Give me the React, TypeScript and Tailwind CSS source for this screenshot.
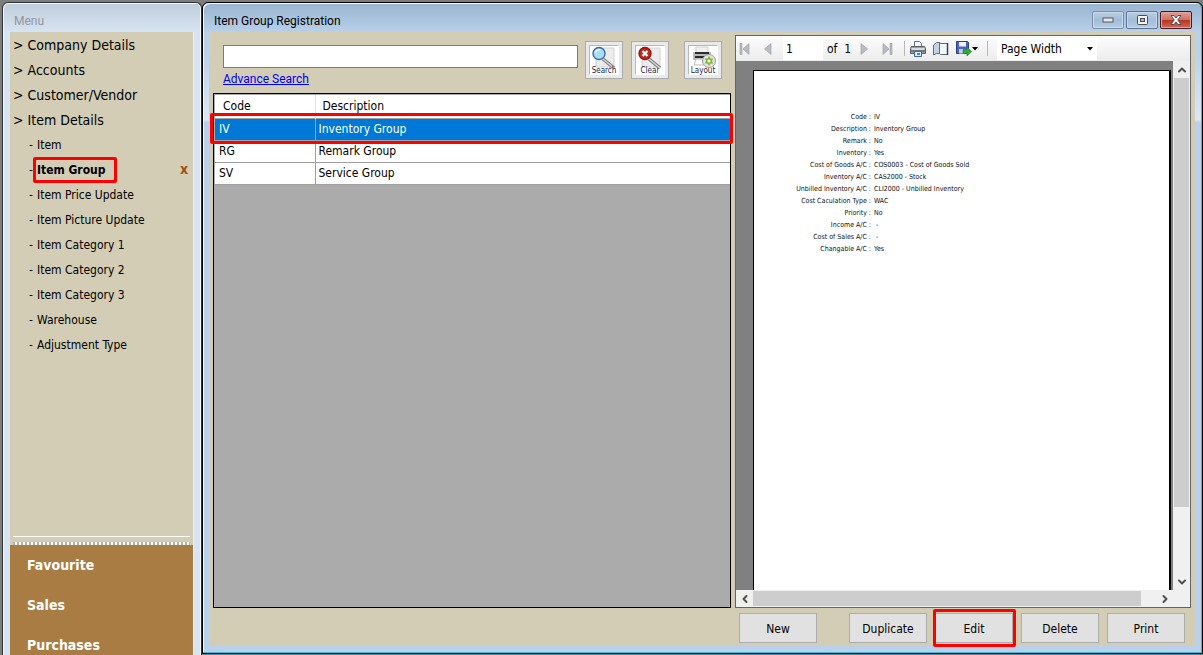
import React, { useState } from 'react';
import { ChevronUp, ChevronDown, ChevronLeft, ChevronRight } from 'lucide-react';

const menuGroups = ['Company Details', 'Accounts', 'Customer/Vendor', 'Item Details'];

const itemMenu = [
  'Item',
  'Item Group',
  'Item Price Update',
  'Item Picture Update',
  'Item Category 1',
  'Item Category 2',
  'Item Category 3',
  'Warehouse',
  'Adjustment Type',
];

const modules = ['Favourite', 'Sales', 'Purchases'];

const groups = [
  { code: 'IV', description: 'Inventory Group' },
  { code: 'RG', description: 'Remark Group' },
  { code: 'SV', description: 'Service Group' },
];

const report = [
  ['Code', 'IV'],
  ['Description', 'Inventory Group'],
  ['Remark', 'No'],
  ['Inventory', 'Yes'],
  ['Cost of Goods A/C', 'COS0003 - Cost of Goods Sold'],
  ['Inventory A/C', 'CAS2000 - Stock'],
  ['Unbilled Inventory A/C', 'CLI2000 - Unbilled Inventory'],
  ['Cost Caculation Type', 'WAC'],
  ['Priority', 'No'],
  ['Income A/C', ' -'],
  ['Cost of Sales A/C', ' -'],
  ['Changable A/C', 'Yes'],
];

const Highlight: React.FC<{ className: string }> = ({ className }) => (
  <span className={`absolute z-10 border-[3px] border-[#fe0000] rounded-[2px] pointer-events-none ${className}`} />
);

const Sidebar: React.FC = () => {
  const [active, setActive] = useState('Item Group');

  return (
    <aside className="w-[200px] shrink-0 flex flex-col rounded-t-md border-t border-x border-[#2f3338] bg-[linear-gradient(#bfcddb_0px,#d7e4f2_30px)] px-[7px] shadow-[inset_1px_1px_0_#f4f8fc,inset_-1px_0_0_#f4f8fc]">
      <header className="h-[29px] shrink-0 pt-[6px] pl-1 flex items-center text-[12px] text-[#8f979f] font-['Roboto',sans-serif]">Menu</header>
      <nav className="flex-1 min-h-0 flex flex-col bg-[#d4cdb5] border-r border-[#f3f1ea]">
        <ul className="pl-[3px]">
          {menuGroups.map((name) => (
            <li key={name} className="h-[25px] flex items-center">
              <a href="#" className="text-[14px] leading-5 text-black">&gt; {name}</a>
            </li>
          ))}
        </ul>
        <ul className="pl-[19px]">
          {itemMenu.map((name) => (
            <li key={name} className="h-[25px] flex items-center justify-between pr-[5px] text-[12px]">
              <span className="relative flex">
                <span className="w-2">-</span>
                <a
                  href="#"
                  onClick={() => setActive(name)}
                  className={name === active ? 'font-bold text-black' : 'text-black'}
                >
                  {name}
                </a>
                {name === active && <Highlight className="-inset-y-1 left-1 -right-[11px]" />}
              </span>
              {name === active && (
                <button aria-label="Close Item Group" className="text-[14px] font-bold text-[#a0500c]">x</button>
              )}
            </li>
          ))}
        </ul>
        <div className="mt-auto mx-[3px] h-[13px] pt-1">
          <div className="border-t border-white pt-[5px]">
            <div className="h-[3px] bg-[repeating-linear-gradient(90deg,#b5b2a6_0px,#b5b2a6_2px,#ffffff_2px,#ffffff_4px)]" />
          </div>
        </div>
        <ul className="h-[110px] overflow-hidden bg-[#a97c43] pl-[17px]">
          {modules.map((name) => (
            <li key={name} className="h-10 flex items-center">
              <a href="#" className="text-[14px] font-bold text-white">{name}</a>
            </li>
          ))}
        </ul>
      </nav>
    </aside>
  );
};

const WindowButtons: React.FC = () => (
  <div className="flex gap-[2px]">
    <button aria-label="Minimize" className="w-8 h-[18px] flex items-center justify-center rounded-[2px] border border-[#7c8fa8] bg-[linear-gradient(#bacde3,#a3bcd8_50%,#b6cce5)] shadow-[inset_0_0_0_1px_#c9daec]">
      <svg width="12" height="6" viewBox="0 0 12 6"><rect x="1" y="1" width="10" height="4" fill="#e6e6e6" stroke="#565a60" /></svg>
    </button>
    <button aria-label="Maximize" className="w-8 h-[18px] flex items-center justify-center rounded-[2px] border border-[#5c7390] bg-[linear-gradient(#bacde3,#a3bcd8_50%,#b6cce5)] shadow-[inset_0_0_0_1px_#c9daec]">
      <svg width="11" height="10" viewBox="0 0 11 10">
        <rect x=".5" y=".5" width="10" height="9" rx="1" fill="#f4f4f4" stroke="#494d55" />
        <rect x="3.5" y="3.5" width="4" height="3" fill="#9bb5d3" stroke="#494d55" />
      </svg>
    </button>
    <button aria-label="Close" className="w-8 h-[18px] flex items-center justify-center rounded-[2px] border border-[#4a1420] bg-[linear-gradient(#e0a096,#cf7164_48%,#b5321f_50%,#cf6a52)] shadow-[inset_0_0_0_1px_#e2a59b]">
      <svg width="12" height="10" viewBox="0 0 12 10">
        <path d="M1 .5h3l2 2.500 2-2.500h3L7.800 5 11 9.500H8L6 7 4 9.500H1L4.200 5z" fill="#f6f6f6" stroke="#4e4f5a" />
      </svg>
    </button>
  </div>
);

const Magnifier: React.FC<{ clear?: boolean }> = ({ clear }) => (
  <>
    <path d="M6 2h18v19H6z" fill="#ececec" stroke="#d2d2d2" />
    <path d="M13 13l11 9" stroke="#777" strokeWidth="3.4" />
    <path d="M13 13l11 9" stroke="#d8d8d8" strokeWidth="1.4" />
    <circle cx="9" cy="7.500" r="6" fill={clear ? '#c22718' : '#a9dcf7'} stroke={clear ? '#8c1b12' : '#3c6ea0'} strokeWidth="1.4" />
    {clear ? (
      <path d="M6.500 5l5 5M11.500 5l-5 5" stroke="#fff" strokeWidth="2.200" />
    ) : (
      <path d="M5.500 6.500a4 4 0 0 1 5-2.500" stroke="#eefaff" strokeWidth="1.600" fill="none" />
    )}
  </>
);

const LayoutIcon: React.FC = () => (
  <>
    <path d="M7 1h12v6H7z" fill="#f0f0f0" stroke="#cfcfcf" />
    <path d="M4 6h18v8H4z" fill="#b8b8b8" />
    <path d="M6 6h14v2H6zM6 10h14v2H6z" fill="#2c2c2c" />
    <path d="M7 13h11v6H5z" fill="#fafafa" stroke="#bbb" />
    <circle cx="20" cy="15" r="6.500" fill="#e4e4e4" stroke="#9a9a9a" />
    <path d="M20 10l1.500 2.400h2.800L22.900 15l1.400 2.600h-2.800L20 20l-1.500-2.400h-2.800l1.400-2.600-1.400-2.600h2.800z" fill="#7bb928" />
    <circle cx="20" cy="15" r="1.600" fill="#fff" />
  </>
);

const ImageButton: React.FC<{ label: string; className?: string; children: React.ReactNode }> = ({ label, className = '', children }) => (
  <button className={`w-[38px] h-[38px] shrink-0 flex flex-col items-center border border-[#acacac] bg-[#e9e9ec] p-[3px] ${className}`}>
    <span className="w-[30px] h-[30px] flex flex-col items-center bg-white border border-t-[#b8b8b8] border-l-[#b8b8b8] border-white">
      <svg width="28" height="22" viewBox="0 0 28 22" className="shrink-0">{children}</svg>
      <span className="-mt-px text-[8px] leading-[8px] text-[#1d1d45]">{label}</span>
    </span>
  </button>
);

const SearchBar: React.FC = () => {
  const [query, setQuery] = useState('');

  return (
    <div className="h-[61px] shrink-0 flex items-start pt-[9px] pl-[10px] pr-[9px]">
      <div className="flex-1 pt-1">
        <input
          aria-label="Search"
          value={query}
          onChange={(e) => setQuery(e.target.value)}
          className="block w-full h-[23px] px-1 bg-white border border-[#7a7a7a] text-[12px] outline-none"
        />
        <a href="#" className="block w-fit mt-1 text-[12px] leading-[15px] text-[#0000f0] underline font-['Roboto',sans-serif]">Advance Search</a>
      </div>
      <ImageButton label="Search" className="ml-[7px]"><Magnifier /></ImageButton>
      <ImageButton label="Clear" className="ml-2"><Magnifier clear /></ImageButton>
      <ImageButton label="Layout" className="ml-[15px]"><LayoutIcon /></ImageButton>
    </div>
  );
};

const GroupTable: React.FC = () => {
  const [selected, setSelected] = useState('IV');

  return (
    <div className="relative flex-1 border border-black bg-[#ababab] pt-px pl-px">
      <table className="w-full table-fixed border-collapse bg-white text-[12px]">
        <colgroup>
          <col className="w-[100px]" />
          <col />
        </colgroup>
        <thead>
          <tr className="h-[23px] border-b border-[#a0a0a0] text-left">
            <th className="border-r border-[#e0e0e0] pl-2 font-normal">Code</th>
            <th className="pl-[7px] font-normal">Description</th>
          </tr>
        </thead>
        <tbody>
          {groups.map((g) => (
            <tr
              key={g.code}
              onClick={() => setSelected(g.code)}
              className={`h-[22px] border-b border-[#a0a0a0] ${g.code === selected ? 'bg-[#0078d7] text-white' : ''}`}
            >
              <td className="border-r border-[#a0a0a0] pl-1">{g.code}</td>
              <td className="pl-[3px]">{g.description}</td>
            </tr>
          ))}
        </tbody>
      </table>
      <Highlight className="top-[19px] h-[31px] -left-1 -right-[3px]" />
    </div>
  );
};

const PagerButton: React.FC<{ label: string; d: string; className: string }> = ({ label, d, className }) => (
  <button aria-label={label} className={className}>
    <svg width="12" height="12" viewBox="0 0 12 12"><path d={d} fill="#b9bcc1" stroke="#96999e" strokeWidth=".6" /></svg>
  </button>
);

const ReportToolbar: React.FC = () => (
  <div className="h-[25px] shrink-0 flex items-center bg-[linear-gradient(#fdfdfd,#ececec)] text-[12px]">
    <PagerButton label="First page" d="M1 .5h2v11H1zM10 .5v11L4 6z" className="ml-[3px]" />
    <PagerButton label="Previous page" d="M9 .5v11L2.500 6z" className="ml-[11px]" />
    <input aria-label="Page number" defaultValue="1" className="ml-[9px] w-10 h-[23px] pl-[3px] bg-white outline-none" />
    <span className="ml-1 w-[27px] whitespace-nowrap">of&nbsp; 1</span>
    <PagerButton label="Next page" d="M3 .5v11L9.500 6z" className="ml-1" />
    <PagerButton label="Last page" d="M2 .5v11L8 6zM9 .5h2v11H9z" className="ml-[11px]" />
    <span className="ml-[11px] w-px h-[15px] bg-[#b8b8b8]" />
    <button aria-label="Print report" className="ml-[5px]">
      <svg width="16" height="16" viewBox="0 0 16 16">
        <path d="M4.500 7V.5h5l2 2V7" fill="#f5f8fc" stroke="#55708f" />
        <path d="M1.500 5.500h13l1 2v5H.5v-5z" fill="#9a9fa5" stroke="#5d6268" />
        <path d="M1.500 7h13v2h-13z" fill="#d9dcdf" />
        <path d="M1 10h14" stroke="#4c5157" />
        <path d="M4.500 10.500h7v5h-7z" fill="#dcebfb" stroke="#45698f" />
        <path d="M7 12h3v2H7z" fill="#3d8be0" />
      </svg>
    </button>
    <button aria-label="Print layout" className="ml-[7px]">
      <svg width="16" height="14" viewBox="0 0 16 14">
        <path d="M.5 3l3-2.500h3.500v11H3.500L.5 13z" fill="#c2d3e4" stroke="#5d6d7f" />
        <path d="M7.500 1.500h7v11h-7l-1-1v-11z" fill="#f6f9fc" stroke="#5d6d7f" />
        <path d="M14.500 1v12" stroke="#35424f" strokeWidth="1.500" />
      </svg>
    </button>
    <button aria-label="Export" className="ml-[7px] flex items-center gap-1">
      <svg width="16" height="15" viewBox="0 0 16 15">
        <path d="M.5.5h11l1 1v11H.5z" fill="#4a63c0" stroke="#2d3f8c" />
        <path d="M3 1h7v4.500H3z" fill="#eef2fb" />
        <path d="M3 8h6v4.500H3z" fill="#c9d3ee" />
        <path d="M7 8.500h4V6l4.500 4.500L11 15v-2.500H7z" fill="#35a838" stroke="#1d7a25" strokeWidth=".6" />
      </svg>
      <svg width="6" height="4" viewBox="0 0 6 4" className="-ml-1"><path d="M0 0h6L3 3.500z" fill="#000" /></svg>
    </button>
    <span className="ml-[9px] w-px h-[15px] bg-[#b8b8b8]" />
    <span className="relative ml-[9px]">
      <select aria-label="Zoom" className="appearance-none block w-[100px] h-[22px] pl-1 bg-white outline-none">
        <option>Page Width</option>
        <option>Whole Page</option>
        <option>100%</option>
      </select>
      <svg width="6" height="4" viewBox="0 0 6 4" className="absolute right-1 top-[9px] pointer-events-none"><path d="M0 0h6L3 3.500z" fill="#000" /></svg>
    </span>
  </div>
);

const ReportViewer: React.FC = () => (
  <section className="flex-1 min-h-0 flex flex-col border border-[#646464] bg-[#f0f0f0]">
    <ReportToolbar />
    <div className="flex-1 min-h-0 flex">
      <div className="flex-1 flex bg-[#808080] pt-[9px] pl-[17px] pr-[2px]">
        <article className="flex-1 bg-white border-t border-l border-r-2 border-black pt-10">
          <dl className="grid grid-cols-[117px_1fr] gap-x-[3px] text-[7px] leading-3 text-[#111]">
            {report.map(([label, value]) => (
              <React.Fragment key={label}>
                <dt className="text-right whitespace-nowrap">{label} :</dt>
                <dd className="whitespace-pre">{value}</dd>
              </React.Fragment>
            ))}
          </dl>
        </article>
      </div>
      <div className="w-[17px] flex flex-col items-center text-[#505050]">
        <button aria-label="Scroll up" className="h-[17px]"><ChevronUp size={12} strokeWidth={4} /></button>
        <div className="w-[15px] flex-[429] bg-[#cdcdcd]" />
        <div className="flex-[66]" />
        <button aria-label="Scroll down" className="h-[17px]"><ChevronDown size={12} strokeWidth={4} /></button>
      </div>
    </div>
    <div className="h-[17px] shrink-0 flex items-center text-[#505050]">
      <button aria-label="Scroll left" className="w-[17px] flex justify-center"><ChevronLeft size={12} strokeWidth={4} /></button>
      <div className="h-[15px] flex-[388] bg-[#cdcdcd]" />
      <div className="flex-[15]" />
      <button aria-label="Scroll right" className="w-[17px] mr-[17px] flex justify-center"><ChevronRight size={12} strokeWidth={4} /></button>
    </div>
  </section>
);

const ActionButton: React.FC<{ label: string }> = ({ label }) => (
  <button className="block w-[78px] h-[30px] border border-[#adadad] bg-[#e1e1e1] pt-px text-[12px] text-black">{label}</button>
);

const ItemGroupWindow: React.FC = () => (
  <main className="flex-1 min-w-0 mb-px flex flex-col rounded-t-md border border-black">
    <div className="flex-1 min-h-0 flex flex-col rounded-t-md border-r border-b border-[#1fc8e8] bg-[linear-gradient(#99b4d1_0px,#b9d1ea_30px,#b9d1ea_50px,#dce8f5_117px,#b9d1ea_119px)] px-[6px] pb-[6px] shadow-[inset_1px_1px_0_#f4f8fc]">
      <header className="h-[29px] shrink-0 flex items-center justify-between pt-1 pl-[5px] pr-[3px]">
        <h1 className="pt-[2px] text-[12px] text-black font-['Roboto',sans-serif]">Item Group Registration</h1>
        <WindowButtons />
      </header>
      <div className="flex-1 min-h-0 flex gap-1 bg-[#d4cdb5] px-1">
        <div className="flex-[518] flex flex-col pb-[38px]">
          <SearchBar />
          <GroupTable />
        </div>
        <div className="flex-[456] flex flex-col pt-[3px]">
          <ReportViewer />
          <div className="h-[38px] shrink-0 flex items-center justify-between pt-[2px] pl-1 pr-[6px]">
            <ActionButton label="New" />
            <div className="flex gap-2">
              <ActionButton label="Duplicate" />
              <span className="relative">
                <ActionButton label="Edit" />
                <Highlight className="-top-1 -bottom-1 -left-[2px] -right-[3px]" />
              </span>
              <ActionButton label="Delete" />
              <ActionButton label="Print" />
            </div>
          </div>
        </div>
      </div>
    </div>
  </main>
);

export default function App() {
  return (
    <div className="h-screen min-h-[400px] flex overflow-hidden bg-[#7d7d7d] pt-[2px] pl-[2px] font-['DejaVu_Sans_Condensed','Noto_Sans',sans-serif]">
      <Sidebar />
      <ItemGroupWindow />
    </div>
  );
}
